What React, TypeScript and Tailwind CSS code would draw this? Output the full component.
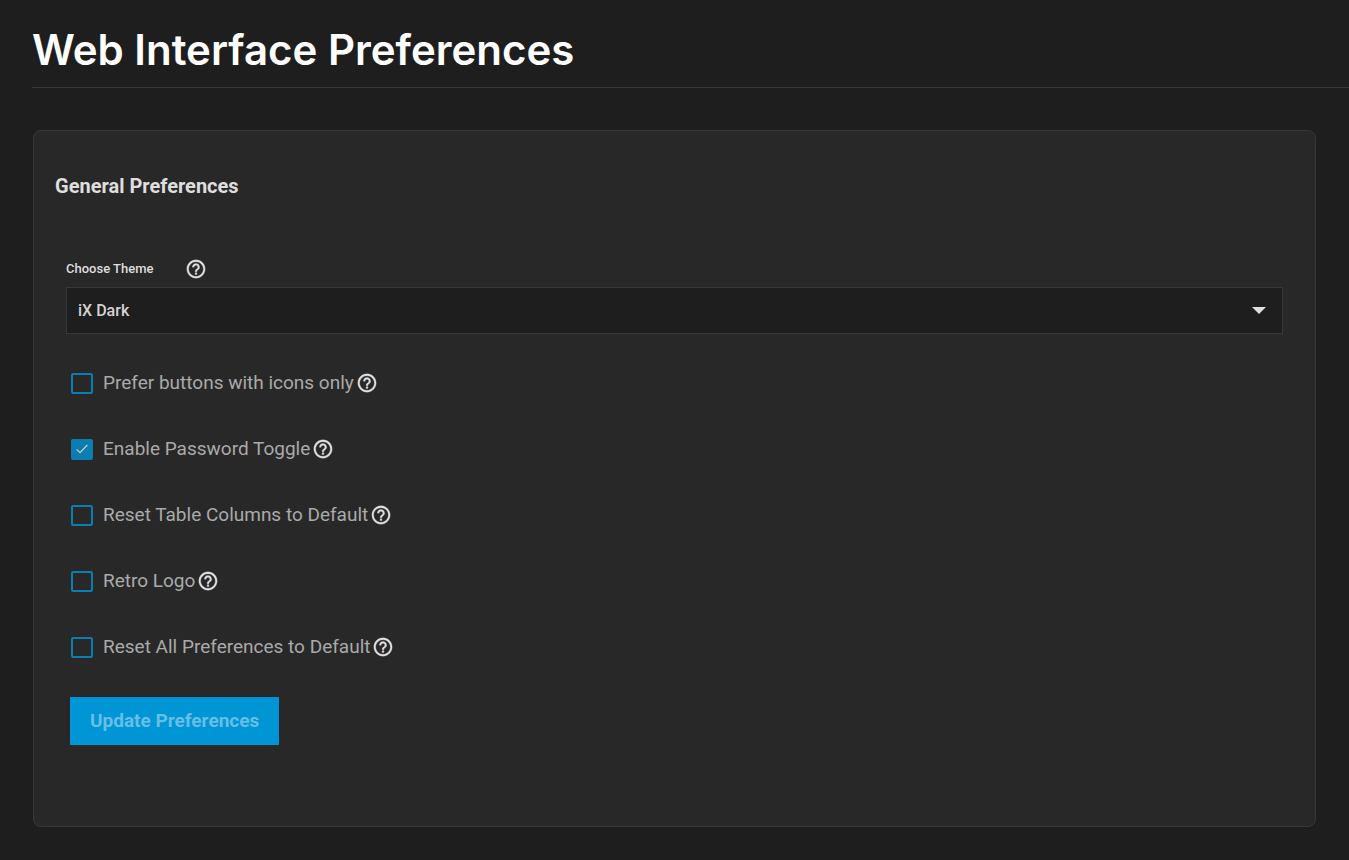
import { useState } from "react";

const OPTIONS = [
  { id: "icons-only", label: "Prefer buttons with icons only", checked: false },
  { id: "password-toggle", label: "Enable Password Toggle", checked: true },
  { id: "reset-columns", label: "Reset Table Columns to Default", checked: false },
  { id: "retro-logo", label: "Retro Logo", checked: false },
  { id: "reset-all", label: "Reset All Preferences to Default", checked: false },
];

function HelpButton({ topic }: { topic: string }) {
  return (
    <button type="button" aria-label={`Help: ${topic}`} className="shrink-0 text-[#e0e0e0]">
      <svg viewBox="0 0 24 24" className="size-[22px]" fill="currentColor" stroke="currentColor" strokeWidth="0.3">
        <path d="M11 18h2v-2h-2v2zm1-16C6.48 2 2 6.48 2 12s4.48 10 10 10 10-4.48 10-10S17.52 2 12 2zm0 18c-4.41 0-8-3.59-8-8s3.59-8 8-8 8 3.59 8 8-3.59 8-8 8zm0-14c-2.21 0-4 1.79-4 4h2c0-1.1.9-2 2-2s2 .9 2 2c0 2-3 1.75-3 5h2c0-2.25 3-2.5 3-5 0-2.21-1.79-4-4-4z" />
      </svg>
    </button>
  );
}

function Option({ id, label, checked }: { id: string; label: string; checked: boolean }) {
  const [on, setOn] = useState(checked);
  return (
    <div className="flex h-[22px] items-center">
      <span className="grid shrink-0 place-items-center">
        <input
          id={id}
          type="checkbox"
          checked={on}
          onChange={() => setOn(!on)}
          className="col-start-1 row-start-1 h-[21px] w-[22px] appearance-none rounded-xs border-2 border-[#0b7db1] checked:bg-[#0b7db1]"
        />
        {on && (
          <svg viewBox="0 0 12 10" className="pointer-events-none col-start-1 row-start-1 h-[10px] w-[12px]" fill="none" stroke="#c4cdd2" strokeWidth="1.3">
            <path d="M0.6 5.4 4 8.7 11.4 1" />
          </svg>
        )}
      </span>
      <label htmlFor={id} className="mr-[2px] ml-[10px] text-[19px] leading-[22px] text-[#aaaaaa]">
        {label}
      </label>
      <HelpButton topic={label} />
    </div>
  );
}

export default function App() {
  return (
    <div className="min-h-screen bg-[#1e1e1e] font-['Roboto',sans-serif]">
      <header className="ml-8 border-b border-[#383838] pt-5 pb-[7px]">
        <h1 className="font-['Inter',sans-serif] text-[42px] leading-[60px] font-semibold text-white">Web Interface Preferences</h1>
      </header>
      <main className="px-[33px] pt-[42px] pb-[33px]">
        <section className="rounded-lg border border-[#383838] bg-[#282828] px-8 pt-[42px] pb-[81px]">
          <h2 className="-ml-[11px] text-[20px] leading-[26px] font-bold text-[#dedede]">General Preferences</h2>
          <form onSubmit={(e) => e.preventDefault()}>
            <div className="mt-[59px] flex items-center gap-8">
              <label htmlFor="theme" className="text-[13px] leading-[22px] font-medium text-[#dedede]">
                Choose Theme
              </label>
              <HelpButton topic="Choose Theme" />
            </div>
            <div className="mt-[7px] grid items-center">
              <select
                id="theme"
                defaultValue="dark"
                className="col-start-1 row-start-1 h-[47px] w-full appearance-none border border-[#383838] bg-[#1e1e1e] px-[11px] pt-px text-[16px] font-medium text-[#d4d4d4]"
              >
                <option value="dark">iX Dark</option>
              </select>
              <svg viewBox="0 0 14 7" className="pointer-events-none col-start-1 row-start-1 mr-[17px] h-[7px] w-[14px] justify-self-end" fill="#dedede">
                <path d="M0 0h14L7 7z" />
              </svg>
            </div>
            <div className="mt-[38px] ml-[5px] flex flex-col gap-11">
              {OPTIONS.map((o) => (
                <Option key={o.id} {...o} />
              ))}
            </div>
            <button type="submit" className="mt-[39px] ml-1 h-12 bg-[#0095d5] px-5 text-[19px] font-bold text-[#66bfe6]">
              Update Preferences
            </button>
          </form>
        </section>
      </main>
    </div>
  );
}
